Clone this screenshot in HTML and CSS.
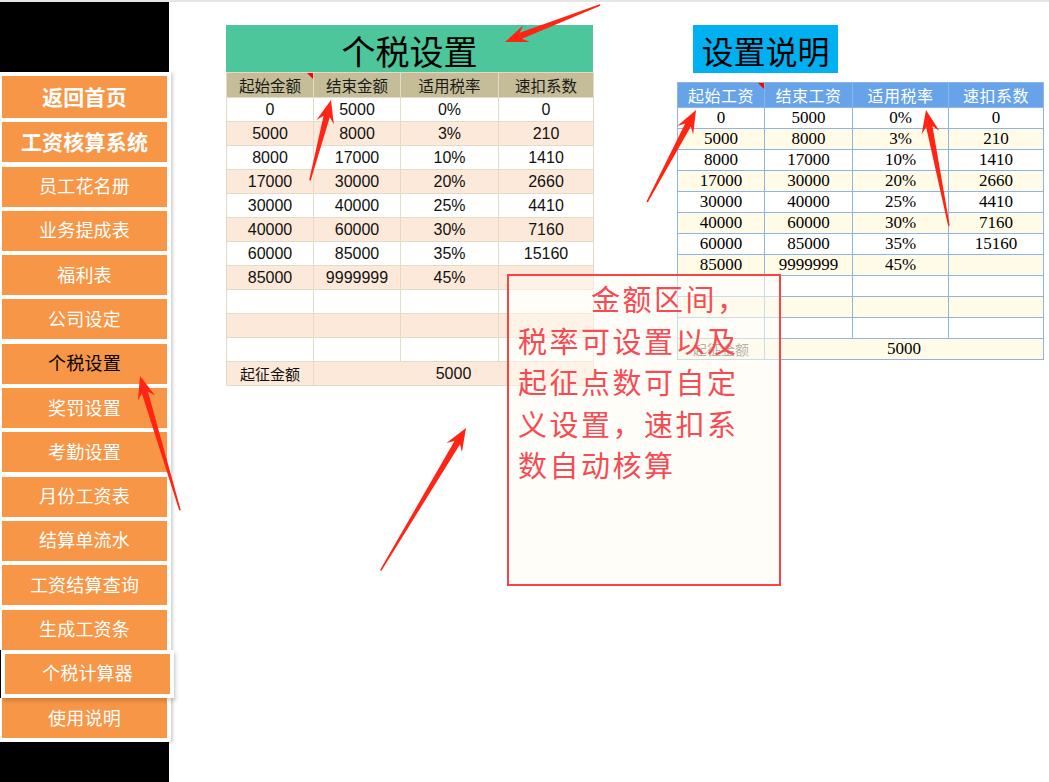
FILE: index.html
```html
<!DOCTYPE html>
<html lang="zh-CN">
<head>
<meta charset="utf-8">
<title>个税设置</title>
<link rel="stylesheet" href="styles.css">
</head>
<body>
<div class="topline"></div>
<div class="page">
  <aside class="sidebar">
    <div class="sb-top"></div>
    <nav class="menu">
      <div class="btn strong first">返回首页</div>
      <div class="btn strong">工资核算系统</div>
      <div class="btn">员工花名册</div>
      <div class="btn">业务提成表</div>
      <div class="btn">福利表</div>
      <div class="btn">公司设定</div>
      <div class="btn current">个税设置</div>
      <div class="btn">奖罚设置</div>
      <div class="btn">考勤设置</div>
      <div class="btn">月份工资表</div>
      <div class="btn">结算单流水</div>
      <div class="btn">工资结算查询</div>
      <div class="btn">生成工资条</div>
      <div class="btn raised">个税计算器</div>
      <div class="btn">使用说明</div>
    </nav>
    <div class="sb-bottom"></div>
  </aside>

  <main class="sheet">
    <section class="tax-block">
      <div class="tax-title">个税设置</div>
      <table class="tax-table">
        <colgroup><col class="c1"><col class="c2"><col class="c3"><col class="c4"></colgroup>
        <thead>
          <tr><th class="mark">起始金额</th><th>结束金额</th><th>适用税率</th><th>速扣系数</th></tr>
        </thead>
        <tbody>
          <tr><td>0</td><td>5000</td><td>0%</td><td>0</td></tr>
          <tr><td>5000</td><td>8000</td><td>3%</td><td>210</td></tr>
          <tr><td>8000</td><td>17000</td><td>10%</td><td>1410</td></tr>
          <tr><td>17000</td><td>30000</td><td>20%</td><td>2660</td></tr>
          <tr><td>30000</td><td>40000</td><td>25%</td><td>4410</td></tr>
          <tr><td>40000</td><td>60000</td><td>30%</td><td>7160</td></tr>
          <tr><td>60000</td><td>85000</td><td>35%</td><td>15160</td></tr>
          <tr><td>85000</td><td>9999999</td><td>45%</td><td></td></tr>
          <tr><td></td><td></td><td></td><td></td></tr>
          <tr><td></td><td></td><td></td><td></td></tr>
          <tr><td></td><td></td><td></td><td></td></tr>
          <tr class="foot"><td>起征金额</td><td colspan="3">5000</td></tr>
        </tbody>
      </table>
    </section>

    <section class="info-block">
      <div class="info-title">设置说明</div>
      <table class="info-table">
        <colgroup><col class="d1"><col class="d2"><col class="d3"><col class="d4"></colgroup>
        <thead>
          <tr><th class="mark">起始工资</th><th>结束工资</th><th>适用税率</th><th>速扣系数</th></tr>
        </thead>
        <tbody>
          <tr><td>0</td><td>5000</td><td>0%</td><td>0</td></tr>
          <tr><td>5000</td><td>8000</td><td>3%</td><td>210</td></tr>
          <tr><td>8000</td><td>17000</td><td>10%</td><td>1410</td></tr>
          <tr><td>17000</td><td>30000</td><td>20%</td><td>2660</td></tr>
          <tr><td>30000</td><td>40000</td><td>25%</td><td>4410</td></tr>
          <tr><td>40000</td><td>60000</td><td>30%</td><td>7160</td></tr>
          <tr><td>60000</td><td>85000</td><td>35%</td><td>15160</td></tr>
          <tr><td>85000</td><td>9999999</td><td>45%</td><td></td></tr>
          <tr><td></td><td></td><td></td><td></td></tr>
          <tr><td></td><td></td><td></td><td></td></tr>
          <tr><td></td><td></td><td></td><td></td></tr>
          <tr class="foot"><td class="label">起征金额</td><td colspan="3">5000</td></tr>
        </tbody>
      </table>
    </section>
  </main>
</div>

<div class="note">
  <div class="line indent">金额区间，</div>
  <div class="line">税率可设置以及</div>
  <div class="line">起征点数可自定</div>
  <div class="line">义设置，速扣系</div>
  <div class="line">数自动核算</div>
</div>

<svg class="arrows" width="1049" height="782" viewBox="0 0 1049 782" aria-hidden="true">
  <polygon points="0,0 -23,-9 -17,-3.2 -102,-0.8 -102,0.8 -17,3.2 -23,9" transform="translate(505 42) rotate(158.7)"/>
  <polygon points="0,0 -23,-9 -17,-3.2 -83,-0.8 -83,0.8 -17,3.2 -23,9" transform="translate(331 100) rotate(-75.3)"/>
  <polygon points="0,0 -23,-9 -17,-3.2 -140,-0.8 -140,0.8 -17,3.2 -23,9" transform="translate(140 376) rotate(-106.6)"/>
  <polygon points="0,0 -23,-9 -17,-3.2 -166,-0.8 -166,0.8 -17,3.2 -23,9" transform="translate(466 428) rotate(-59.1)"/>
  <polygon points="0,0 -23,-9 -17,-3.2 -104,-0.8 -104,0.8 -17,3.2 -23,9" transform="translate(696 110) rotate(-62)"/>
  <polygon points="0,0 -23,-9 -17,-3.2 -118,-0.8 -118,0.8 -17,3.2 -23,9" transform="translate(926 110) rotate(-101.2)"/>
</svg>
</body>
</html>
```

FILE: styles.css
```css
html, body {
  margin: 0;
  padding: 0;
}

body {
  position: relative;
  width: 1049px;
  height: 782px;
  overflow: hidden;
  background: #ffffff;
  font-family: "Noto Sans CJK SC", "Liberation Sans", sans-serif;
}

.topline {
  height: 2px;
  background: #e6e6e6;
}

.page {
  display: flex;
  align-items: flex-start;
}

/* ---------- sidebar ---------- */
.sidebar {
  width: 171px;
  flex: none;
  display: flex;
  flex-direction: column;
}

.sb-top {
  width: 169px;
  height: 70px;
  background: #000;
}

.menu {
  position: relative;
  z-index: 1;
  height: 670px;
  box-sizing: border-box;
  padding: 4px 0 0 2px;
  background: #fff;
  box-shadow: 2px 1px 3px rgba(0, 0, 0, 0.18);
  display: flex;
  flex-direction: column;
  gap: 4.3px;
}

.sb-bottom {
  width: 169px;
  height: 40px;
  background: #000;
}

.btn {
  box-sizing: border-box;
  width: 165px;
  height: 40px;
  padding-bottom: 3px;
  flex: none;
  background: #f79646;
  color: #ffffff;
  font-size: 18px;
  display: flex;
  align-items: center;
  justify-content: center;
  letter-spacing: 0.2px;
}

.btn.first {
  height: 42px;
}

.btn.strong {
  font-size: 21px;
  font-weight: 700;
}

.btn.current {
  color: #000000;
}

.btn.raised {
  position: relative;
  transform: translateX(3px);
  box-shadow: 0 0 0 4px #ffffff, 2px 3px 4px 4px rgba(0, 0, 0, 0.16);
}

.btn.raised::before {
  content: "";
  position: absolute;
  left: -5px;
  top: -4px;
  width: 1px;
  height: 48px;
  background: #000;
}

/* ---------- sheet ---------- */
.sheet {
  display: flex;
  align-items: flex-start;
  padding-top: 23px;
}

.tax-block {
  margin-left: 55px;
  width: 367px;
}

.tax-title {
  height: 43px;
  padding-top: 4px;
  background: #4cc69a;
  color: #000;
  font-size: 34px;
  line-height: 43px;
  text-align: center;
}

table {
  width: 100%;
  border-collapse: collapse;
  table-layout: fixed;
}

th, td {
  padding: 0;
  text-align: center;
  white-space: nowrap;
}

.tax-table col.c1 { width: 87px; }
.tax-table col.c2 { width: 87px; }
.tax-table col.c3 { width: 98px; }
.tax-table col.c4 { width: 95px; }

.tax-table {
  font-family: "Liberation Sans", "Noto Sans CJK SC", sans-serif;
  font-size: 16px;
  color: #111;
}

.tax-table th,
.tax-table td {
  border: 1px solid #e4dac8;
}

.tax-table thead tr {
  height: 25px;
}

.tax-table th {
  background: #c4bd97;
  font-weight: 400;
  color: #1a1a1a;
  font-family: "Noto Sans CJK SC", sans-serif;
  font-size: 15.5px;
}

.tax-table tbody tr {
  height: 24px;
  background: #ffffff;
}

.tax-table tbody tr:nth-child(even) {
  background: #fde9d9;
}

.tax-table tbody tr.foot {
  background: #fde9d9;
}

.tax-table tr.foot td:first-child {
  font-family: "Noto Sans CJK SC", sans-serif;
  font-size: 15px;
}

th.mark {
  position: relative;
}

th.mark::after {
  content: "";
  position: absolute;
  top: 0;
  right: 0;
  border-top: 6px solid #ff0000;
  border-left: 6px solid transparent;
}

/* ---------- info block ---------- */
.info-block {
  margin-left: 84px;
  width: 366px;
}

.info-title {
  margin-left: 16px;
  width: 145px;
  height: 45px;
  padding-top: 3px;
  background: #00b0f0;
  color: #000;
  font-size: 32px;
  line-height: 45px;
  text-align: center;
}

.info-table {
  margin-top: 9px;
  font-family: "Liberation Serif", "Noto Sans CJK SC", serif;
  font-size: 17px;
  color: #000;
}

.info-table col.d1 { width: 87px; }
.info-table col.d2 { width: 88px; }
.info-table col.d3 { width: 96px; }
.info-table col.d4 { width: 95px; }

.info-table th,
.info-table td {
  border: 1px solid #8eb4e3;
}

.info-table thead tr {
  height: 23px;
}

.info-table th {
  background: #66a3e8;
  color: #ffffff;
  font-weight: 400;
  font-family: "Noto Sans CJK SC", sans-serif;
  font-size: 16px;
  letter-spacing: 0.5px;
}

.info-table tbody tr {
  height: 21px;
  background: #ffffff;
}

.info-table tbody tr:nth-child(even) {
  background: #fffbe6;
}

.info-table tbody tr.foot {
  background: #fffbe6;
}

.info-table td.label {
  font-family: "Noto Sans CJK SC", sans-serif;
  font-size: 14px;
  color: #555;
}

/* ---------- overlays ---------- */
.note {
  position: absolute;
  left: 507px;
  top: 274px;
  width: 274px;
  height: 312px;
  box-sizing: border-box;
  border: 2px solid #fa4343;
  background: rgba(255, 252, 240, 0.55);
  padding: 2px 0 0 9px;
  color: #f54b55;
  font-size: 29px;
  line-height: 41.5px;
  letter-spacing: 2.5px;
  z-index: 2;
}

.note .line {
  white-space: nowrap;
}

.note .indent {
  padding-left: 73px;
}

.arrows {
  position: absolute;
  left: 0;
  top: 0;
  z-index: 3;
  pointer-events: none;
  fill: #ff2414;
}
```
